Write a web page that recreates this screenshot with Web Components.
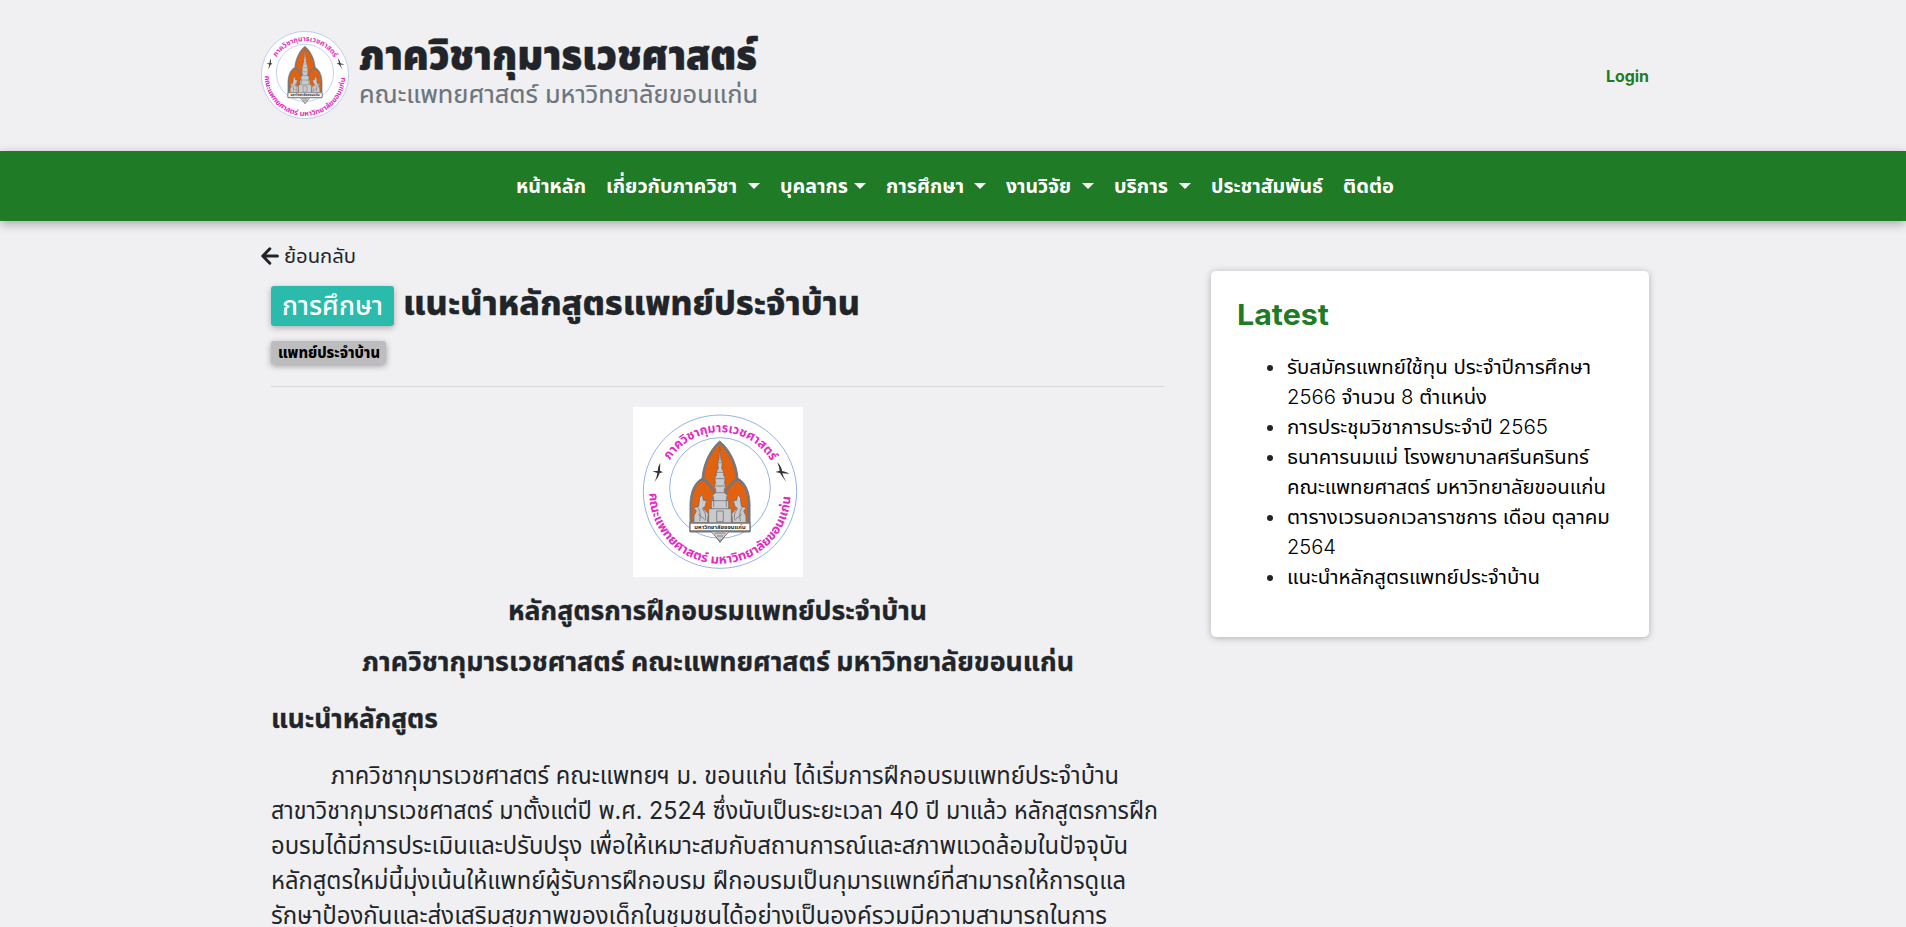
<!DOCTYPE html>
<html lang="th">
<head>
<meta charset="utf-8">
<title>ภาควิชากุมารเวชศาสตร์</title>
<style>
html,body{margin:0;background:#f0f0f2;overflow:hidden;height:927px}
body{font-family:Inter,"Noto Sans Thai","Noto Sans",sans-serif;color:#212529}
</style>
</head>
<body>
<dept-page></dept-page>
<script>
const define=(name,html,after)=>customElements.define(name,class extends HTMLElement{
  connectedCallback(){
    if(this.shadowRoot)return;
    const t=document.createElement('template');t.innerHTML=html;
    this.attachShadow({mode:'open'}).append(t.content.cloneNode(true));
    if(after)after.call(this,this.shadowRoot);
  }
});

/* One line of text set to a measured width: w = width, s = size, h = line height, b = weight */
define('fit-line',`<style>:host{display:block;flex:none;white-space:nowrap}
span{display:inline-block;transform-origin:0 50%;white-space:pre}
::slotted(b){font-weight:300}</style><span><slot></slot></span>`,function(r){
  const g=k=>this.getAttribute(k),span=r.querySelector('span');
  this.style.fontSize=g('s')+'px';this.style.lineHeight=this.style.height=g('h')+'px';
  if(g('b'))this.style.fontWeight=g('b');
  this.style.width=g('w')+'px';
  span.style.transform='scaleX('+(+g('w')/span.getBoundingClientRect().width)+')';
});

define('dept-seal',`<style>:host{display:block;flex:none}svg{display:block;width:100%;height:100%}
text{font-family:"Noto Sans Thai","Noto Sans",sans-serif;font-weight:700;fill:#e22bc0}</style>
<svg>
<defs><path id="top" d="M149 181A178 178 0 0 1 456 188"/><path id="bot" d="M88 279A212 212 0 0 0 512 279L511 240"/></defs>
<circle cx="300" cy="275" r="230" fill="#fff" stroke="#7fa3dc" stroke-width="2.5"/>
<circle cx="300" cy="264" r="151" fill="#fff" stroke="#7fa3dc" stroke-width="2.5"/>
<text font-size="38" textLength="365" lengthAdjust="spacingAndGlyphs"><textPath href="#top" textLength="365" lengthAdjust="spacingAndGlyphs">ภาควิชากุมารเวชศาสตร์</textPath></text>
<text font-size="38" textLength="655" lengthAdjust="spacingAndGlyphs"><textPath href="#bot" textLength="655" lengthAdjust="spacingAndGlyphs">คณะแพทยศาสตร์ มหาวิทยาลัยขอนแก่น</textPath></text>
<g fill="#333"><path d="M97 214Q110 212 113 213Q114 198 121 188Q120 204 120 212L129 217L119 219Q116 232 104 245Q111 231 112 219Z"/>
<path d="M503 218Q490 214 486 213Q484 198 472 187Q478 202 479 212L466 216L480 219Q487 231 499 246Q490 232 487 220L508 221Z"/></g>
<path d="M299 123C275 143 250 184 246 235C226 245 212 270 210 310V396H277L300 427L324 396H390V310C388 270 374 245 354 235C350 184 325 143 299 123Z" fill="#77777b" stroke="#77777b" stroke-width="3"/>
<path d="M299 132C278 151 256 188 253 235C276 250 289 276 289 310H310C310 276 325 250 347 235C344 188 321 151 299 132Z" fill="#e2620f"/>
<path d="M246 242C225 257 217 282 217 312V368H285V312C284 279 269 253 246 242ZM354 242C375 257 383 282 383 312V368H315V312C316 279 331 253 354 242Z" fill="#e2620f"/>
<g fill="#c9cacd" stroke="#66676b" stroke-width="2">
<path d="M299 140L303 180L307 187L305 205L311 216V226L316 235L313 250L318 258L313 268V278L322 286V302H326V326H334V371H266V326H274V302H278V286L287 278V268L282 258L287 250L284 235L289 226V216L295 205L293 187L297 180Z"/>
<path d="M277 302H323M273 326H327M286 278H314M283 258H317M285 236H315M289 217H311M293 188H307M290 333H310V365H290ZM281 289V321M319 289V321" fill="none"/>
<path d="M222 368V348L229 333L221 323L236 319L239 293L247 283L250 301L260 302L255 320L248 324L265 341L262 368ZM378 368V348L371 333L379 323L364 319L361 293L353 283L350 301L340 302L345 320L352 324L335 341L338 368Z"/>
<path d="M230 318Q245 333 239 363M235 343L253 357M246 326Q262 341 255 362M370 318Q355 333 361 363M365 343L347 357M354 326Q338 341 345 362" fill="none"/>
<path d="M271 393H329L300 424Z"/><path d="M284 399H316M291 408H309" fill="none"/>
</g>
<path d="M210 369H390V393H210Z" fill="#fff" stroke="#77777b" stroke-width="4"/>
<text x="223" y="387" font-size="17" textLength="154" lengthAdjust="spacingAndGlyphs" style="fill:#28282b">มหาวิทยาลัยขอนแก่น</text>
</svg>`,function(r){
  r.querySelector('svg').setAttribute('viewBox',this.hasAttribute('round')?'68 43 464 464':'39 21 510 510');
});

define('site-header',`<style>:host{display:flex;box-sizing:border-box;width:1388px;height:151px;margin-left:261px;padding-top:31px;align-items:flex-start}
dept-seal{width:88px;height:88px}
.names{padding-left:10px;flex:1}
.sub{color:#6c757d}
.login{color:#1f7b26;padding-top:30px}</style>
<dept-seal round></dept-seal>
<div class="names"><fit-line style="-webkit-text-stroke:.4px" s="40" h="48" b="900" w="398">ภาควิชากุมารเวชศาสตร์</fit-line>
<fit-line class="sub" style="-webkit-text-stroke:.2px" s="25" h="30" w="399">คณะแพทยศาสตร์ มหาวิทยาลัยขอนแก่น</fit-line></div>
<fit-line class="login" s="16" h="30" b="700" w="43">Login</fit-line>`);

define('main-nav',`<style>:host{display:flex;height:70px;background:#1f7b26;box-shadow:0 3px 10px rgba(0,0,0,.3);box-sizing:border-box;padding-left:516px;gap:20px;align-items:center}
div{display:flex;align-items:center;color:#fff}
i{width:0;height:0;border:6px solid transparent;border-top-color:#fff;border-bottom:0;margin-bottom:0}</style>`,function(r){
  [['หน้าหลัก',70],['เกี่ยวกับภาควิชา',131,11],['บุคลากร',68,5.5],['การศึกษา',78,10],['งานวิจัย',65,11.5],['บริการ',54,10.5],['ประชาสัมพันธ์',112],['ติดต่อ',51]].forEach(([t,w,g])=>{
    const d=document.createElement('div');
    d.innerHTML=`<fit-line s="20" h="30" b="700" w="${w}">${t}</fit-line>`+(g?`<i style="margin-left:${g}px"></i>`:'');
    r.append(d);
  });
});

define('dept-article',`<style>:host{display:block;width:903px}
.back{display:flex;height:30px;align-items:center;gap:5px}
.back svg{width:18px;height:18px;display:block}
.in{padding-left:10px;width:893px}
.head{display:flex;align-items:flex-start;margin-top:15px;gap:9px}
.cat{background:#2abbad;color:#fff;border-radius:3px;box-shadow:0 2px 6px rgba(0,0,0,.28);width:123px;height:40px;box-sizing:border-box;padding-left:11px}
.tag{background:#bdbdbd;color:#000;border-radius:3px;box-shadow:0 2px 6px rgba(0,0,0,.35);width:115px;height:23px;box-sizing:border-box;padding-left:7px;margin-top:15px}
hr{border:0;height:1px;background:#d7d8da;margin:22px 0 20px}
dept-seal{width:170px;height:170px;background:#fff;margin:0 auto}
.c{margin-left:auto;margin-right:auto}
.k{-webkit-text-stroke:.3px}
.p{padding-left:60px}</style>
<div class="back"><svg viewBox="0 0 18 18" fill="none" stroke="#212529" stroke-width="3" stroke-linecap="round" stroke-linejoin="round"><path d="M8.8 1.8L1.8 9L8.8 16.2M2.4 9H16.4"/></svg><fit-line s="20" h="30" w="72">ย้อนกลับ</fit-line></div>
<div class="in">
<div class="head"><div class="cat"><fit-line s="26" h="40" b="500" w="101">การศึกษา</fit-line></div><fit-line class="k" s="34" h="34" b="800" w="457">แนะนำหลักสูตรแพทย์ประจำบ้าน</fit-line></div>
<div class="tag"><fit-line s="15" h="23" b="800" w="102">แพทย์ประจำบ้าน</fit-line></div>
<hr>
<dept-seal></dept-seal>
<fit-line class="c k" style="margin-top:19px" s="27" h="30" b="700" w="419">หลักสูตรการฝึกอบรมแพทย์ประจำบ้าน</fit-line>
<fit-line class="c k" style="margin-top:21px" s="27" h="30" b="700" w="712">ภาควิชากุมารเวชศาสตร์ คณะแพทยศาสตร์ มหาวิทยาลัยขอนแก่น</fit-line>
<fit-line class="k" style="margin-top:27px" s="27" h="30" b="700" w="167">แนะนำหลักสูตร</fit-line>
<div style="margin-top:24px">
<fit-line class="p" s="24" h="35" w="788">ภาควิชากุมารเวชศาสตร์ คณะแพทยฯ ม. ขอนแก่น ได้เริ่มการฝึกอบรมแพทย์ประจำบ้าน</fit-line>
<fit-line s="24" h="35" w="887">สาขาวิชากุมารเวชศาสตร์ มาตั้งแต่ปี พ.ศ. 2524 ซึ่งนับเป็นระยะเวลา 40 ปี มาแล้ว หลักสูตรการฝึก</fit-line>
<fit-line s="24" h="35" w="857">อบรมได้มีการประเมินและปรับปรุง เพื่อให้เหมาะสมกับสถานการณ์และสภาพแวดล้อมในปัจจุบัน</fit-line>
<fit-line s="24" h="35" w="855">หลักสูตรใหม่นี้มุ่งเน้นให้แพทย์ผู้รับการฝึกอบรม ฝึกอบรมเป็นกุมารแพทย์ที่สามารถให้การดูแล</fit-line>
<fit-line s="24" h="35" w="836">รักษาป้องกันและส่งเสริมสุขภาพของเด็กในชุมชนได้อย่างเป็นองค์รวมมีความสามารถในการ</fit-line>
</div></div>`);

define('latest-card',`<style>:host{display:block;box-sizing:border-box;width:438px;height:366px;margin-top:30px;background:#fff;border-radius:5px;box-shadow:0 1px 7px rgba(0,0,0,.28);padding:24px 26px}
.t{color:#1f7b26}
ul{list-style:none;margin:17px 0 0;padding:0 0 0 50px;color:#000}
li{position:relative}
li::before{content:"";position:absolute;left:-20px;top:13px;width:6px;height:6px;border-radius:50%;background:#212529}</style>
<fit-line class="t" s="29" h="40" b="700" w="92">Latest</fit-line>
<ul>
<li><fit-line s="20" h="30" w="304">รับสมัครแพทย์ใช้ทุน ประจำปีการศึกษา</fit-line><fit-line s="20" h="30" w="200"><b>2566</b> จำนวน <b>8</b> ตำแหน่ง</fit-line></li>
<li><fit-line s="20" h="30" w="261">การประชุมวิชาการประจำปี <b>2565</b></fit-line></li>
<li><fit-line s="20" h="30" w="302">ธนาคารนมแม่ โรงพยาบาลศรีนครินทร์</fit-line><fit-line s="20" h="30" w="319">คณะแพทยศาสตร์ มหาวิทยาลัยขอนแก่น</fit-line></li>
<li><fit-line s="20" h="30" w="323">ตารางเวรนอกเวลาราชการ เดือน ตุลาคม</fit-line><fit-line s="20" h="30" w="49"><b>2564</b></fit-line></li>
<li><fit-line s="20" h="30" w="253">แนะนำหลักสูตรแพทย์ประจำบ้าน</fit-line></li>
</ul>`);

define('dept-page',`<style>:host{display:block}
main{display:flex;justify-content:space-between;width:1388px;margin-left:261px;padding-top:20px}</style>
<site-header></site-header><main-nav></main-nav>
<main><dept-article></dept-article><latest-card></latest-card></main>`);
</script>
</body>
</html>
